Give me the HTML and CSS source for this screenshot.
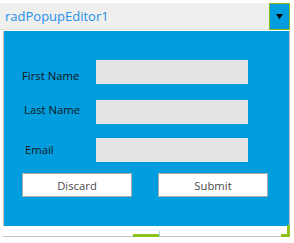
FILE: index.html
```html
<!DOCTYPE html>
<html lang="en">
<head>
  <meta charset="UTF-8">
  <title>radPopupEditor</title>
  <link rel="stylesheet" href="styles.css">
</head>
<body>

  <div class="combo">
    <div class="combo-text">radPopupEditor1</div>
    <div class="combo-arrow">
      <svg width="7" height="5" viewBox="0 0 7 5"><path d="M0 0H7L3.5 5Z" fill="#000"/></svg>
    </div>
  </div>

  <div class="popup">
    <div class="popup-body">
      <div class="form">
        <label class="field-label first">First Name</label>
        <div class="field-input"></div>

        <label class="field-label last">Last Name</label>
        <div class="field-input"></div>

        <label class="field-label email">Email</label>
        <div class="field-input"></div>
      </div>

      <div class="buttons">
        <button class="btn">Discard</button>
        <button class="btn">Submit</button>
      </div>
    </div>
    <div class="popup-footer">
      <div class="line"></div>
      <div class="grip-bar"></div>
      <div class="grip-tick"></div>
      <div class="line"></div>
      <div class="grip-corner"></div>
    </div>
  </div>

</body>
</html>
```

FILE: styles.css
```css
* {
  box-sizing: border-box;
  margin: 0;
  padding: 0;
}

body {
  width: 294px;
  height: 243px;
  background: #fff;
  font-family: "Open Sans", "Noto Sans", sans-serif;
  font-size: 11.3px;
  padding-top: 3px;
}

/* Combo */
.combo {
  width: 290px;
  height: 27px;
  background: #eff0ed;
  border-bottom: 1px solid #e2e3de;
  display: flex;
  align-items: center;
}

.combo-text {
  flex: 1;
  padding-left: 5px;
  color: #1e8ff0;
  font-size: 13px;
  padding-bottom: 1px;
}

.combo-arrow {
  width: 21px;
  height: 27px;
  background: #009ddf;
  border: 1px solid #8fb71a;
  display: flex;
  align-items: center;
  justify-content: center;
}

/* Popup */
.popup {
  position: relative;
  margin-top: 1px;
  margin-left: 3px;
  width: 287px;
  border-left: 1px solid #c3c4bb;
  border-right: 1px solid #c3c4bb;
}

.popup-body {
  background: #009ddf;
  height: 195px;
  padding-top: 29px;
}

.form {
  display: grid;
  grid-template-columns: 92px 152px;
  grid-template-rows: 24px 24px 24px;
  row-gap: 16px;
  align-items: center;
  color: #151515;
}

.form .field-input:nth-of-type(3) {
  margin-top: -5px;
}

.field-label {
  padding-left: 18px;
}

.field-label.first {
  padding-top: 7px;
}

.field-label.last {
  padding-left: 20px;
  padding-bottom: 5px;
}

.field-label.email {
  padding-left: 21px;
  margin-top: -5px;
}

.field-input {
  height: 24px;
  background: #e4e4e4;
}

.buttons {
  display: flex;
  gap: 26px;
  padding-left: 18px;
  margin-top: 9px;
}

.btn {
  width: 110px;
  height: 24px;
  background: #fff;
  border: 1px solid #a9a9a9;
  font-family: "Open Sans", "Noto Sans", sans-serif;
  font-size: 11.3px;
  color: #4a4a4a;
}

/* Footer with resize grip */
.popup-footer {
  height: 11px;
  background: #fff;
  display: flex;
  align-items: flex-end;
  margin-left: -1px;
  margin-right: -1px;
}

.line {
  height: 1px;
  background: #c3c4bb;
}

.popup-footer .line:first-child {
  width: 130px;
}

.popup-footer .line:nth-child(4) {
  width: 121px;
}

.grip-bar {
  width: 26px;
  height: 3px;
  background: #8fc31f;
}

.grip-tick {
  width: 1px;
  height: 6px;
  background: #a8d4f0;
}

.grip-corner {
  position: absolute;
  right: -1px;
  bottom: 0;
  width: 9px;
  height: 12px;
  border-right: 3px solid #8fc31f;
  border-bottom: 3px solid #8fc31f;
}
```
